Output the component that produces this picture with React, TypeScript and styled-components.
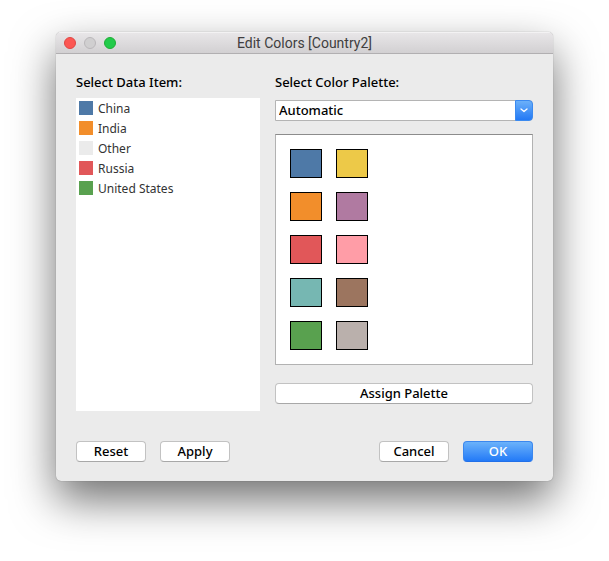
import React from "react";
import styled, { createGlobalStyle } from "styled-components";

const GlobalStyle = createGlobalStyle`
  * { box-sizing: border-box; }
  body {
    margin: 0;
    background: #fff;
    color: #000;
    font: 500 13px/20px "Noto Sans", "Open Sans", sans-serif;
  }
`;

const Desktop = styled.main`
  padding: 32px 56px 80px;
  overflow: hidden;
`;

const Dialog = styled.section`
  overflow: hidden;
  border-radius: 5px;
  background: #ebebeb;
  box-shadow: 0 0 1px rgba(0, 0, 0, 0.45), 0 19px 44px rgba(0, 0, 0, 0.56);
`;

const TitleBar = styled.header`
  display: grid;
  grid-template-columns: 1fr auto 1fr;
  align-items: center;
  height: 22px;
  padding: 0 8px;
  border-top: 1px solid #f3f2f3;
  border-bottom: 1px solid #b1afb1;
  background: linear-gradient(#e8e6e8, #d2d0d2);
`;

const WindowControls = styled.div`
  display: flex;
  gap: 8px;
`;

const WindowButton = styled.button<{ $fill: string; $edge: string }>`
  width: 12px;
  height: 12px;
  padding: 0;
  border: 1px solid ${(p) => p.$edge};
  border-radius: 50%;
  background: ${(p) => p.$fill};
`;

const Title = styled.h1`
  margin: 0;
  color: #403e40;
  font: 400 14px/20px Roboto, sans-serif;
`;

const Content = styled.form`
  padding: 18px 20px 19px;
`;

const Columns = styled.div`
  display: grid;
  grid-template-columns: 184fr 258fr;
  gap: 15px;
`;

const Column = styled.div`
  display: flex;
  flex-direction: column;
`;

const Heading = styled.label`
  padding-bottom: 6px;
`;

const ItemList = styled.ul`
  flex: 1;
  min-height: 313px;
  margin: 0;
  padding: 0 3px;
  background: #fff;
  list-style: none;
`;

const Item = styled.li`
  display: flex;
  align-items: center;
  gap: 5px;
  height: 20px;
  color: #333;
  font-size: 12px;
  font-weight: 400;
`;

const ItemName = styled.span`
  padding-top: 2px;
`;

const ItemColor = styled.span<{ $color: string }>`
  width: 14px;
  height: 14px;
  background: ${(p) => p.$color};
`;

const SelectBox = styled.div`
  display: grid;
  grid-template-columns: 1fr 18px;
  margin-top: 2px;
`;

const Select = styled.select`
  grid-area: 1 / 1 / 2 / 3;
  width: 100%;
  height: 21px;
  padding: 0 22px 0 3px;
  border: 1px solid #b4b4b4;
  border-radius: 0 4px 4px 0;
  background: #fff;
  color: #000;
  font: inherit;
  line-height: 19px;
  appearance: none;
`;

const SelectArrow = styled.span`
  grid-area: 1 / 2;
  display: grid;
  place-items: center;
  border: 1px solid #3b8af0;
  border-radius: 0 4px 4px 0;
  background: linear-gradient(#6bb0f9, #2379f5);
  pointer-events: none;
  z-index: 1;
`;

const Palette = styled.div`
  display: grid;
  grid-template-columns: repeat(2, 32px);
  gap: 14px;
  margin: 13px 0 18px;
  padding: 14px;
  border: 1px solid #b2b2b2;
  border-top-color: #8c8c8c;
  background: #fff;
`;

const Swatch = styled.button<{ $color: string }>`
  height: 29px;
  padding: 0;
  border: 1px solid #000;
  background: ${(p) => p.$color};
`;

const Button = styled.button<{ $primary?: boolean }>`
  min-width: 70px;
  height: 21px;
  padding: 0 8px;
  border: 1px solid ${(p) => (p.$primary ? "#3b87ee" : "#c2c2c2")};
  border-bottom-color: ${(p) => (p.$primary ? "#2270e8" : "#a8a8a8")};
  border-radius: 4px;
  background: ${(p) => (p.$primary ? "linear-gradient(#6bb2fa, #237af7)" : "#fff")};
  color: ${(p) => (p.$primary ? "#fff" : "#000")};
  font: inherit;
  line-height: 19px;
`;

const Footer = styled.footer`
  display: flex;
  gap: 14px;
  margin-top: 30px;
`;

const Spacer = styled.div`
  flex: 1;
`;

const items = [
  { name: "China", color: "#4e79a7" },
  { name: "India", color: "#f28e2b" },
  { name: "Other", color: "#ebebeb" },
  { name: "Russia", color: "#e15759" },
  { name: "United States", color: "#59a14f" },
];

const palette = [
  { name: "Blue", color: "#4e79a7" },
  { name: "Yellow", color: "#edc948" },
  { name: "Orange", color: "#f28e2b" },
  { name: "Purple", color: "#b07aa1" },
  { name: "Red", color: "#e15759" },
  { name: "Pink", color: "#ff9da7" },
  { name: "Teal", color: "#76b7b2" },
  { name: "Brown", color: "#9c755f" },
  { name: "Green", color: "#59a14f" },
  { name: "Gray", color: "#bab0ac" },
];

export default function App() {
  return (
    <>
      <GlobalStyle />
      <Desktop>
        <Dialog role="dialog" aria-labelledby="dialog-title">
          <TitleBar>
            <WindowControls>
              <WindowButton aria-label="Close" $fill="#fc5753" $edge="#df4744" />
              <WindowButton aria-label="Minimize" $fill="#d0cfd0" $edge="#b9b7b9" />
              <WindowButton aria-label="Zoom" $fill="#22cb4a" $edge="#1fad35" />
            </WindowControls>
            <Title id="dialog-title">Edit Colors [Country2]</Title>
          </TitleBar>
          <Content onSubmit={(e) => e.preventDefault()}>
            <Columns>
              <Column>
                <Heading as="div" id="items-label">Select Data Item:</Heading>
                <ItemList aria-labelledby="items-label">
                  {items.map((item) => (
                    <Item key={item.name}>
                      <ItemColor $color={item.color} />
                      <ItemName>{item.name}</ItemName>
                    </Item>
                  ))}
                </ItemList>
              </Column>
              <Column>
                <Heading htmlFor="palette">Select Color Palette:</Heading>
                <SelectBox>
                  <Select id="palette" defaultValue="Automatic">
                    <option>Automatic</option>
                  </Select>
                  <SelectArrow>
                    <svg width="8" height="5" viewBox="0 0 8 5" fill="none" aria-hidden="true">
                      <path d="M1 1l3 2.6L7 1" stroke="#fff" strokeWidth="1.3" strokeLinecap="round" strokeLinejoin="round" />
                    </svg>
                  </SelectArrow>
                </SelectBox>
                <Palette>
                  {palette.map((c) => (
                    <Swatch key={c.name} type="button" aria-label={c.name} $color={c.color} />
                  ))}
                </Palette>
                <Button type="button">Assign Palette</Button>
              </Column>
            </Columns>
            <Footer>
              <Button type="reset">Reset</Button>
              <Button type="button">Apply</Button>
              <Spacer />
              <Button type="button">Cancel</Button>
              <Button type="submit" $primary>OK</Button>
            </Footer>
          </Content>
        </Dialog>
      </Desktop>
    </>
  );
}
